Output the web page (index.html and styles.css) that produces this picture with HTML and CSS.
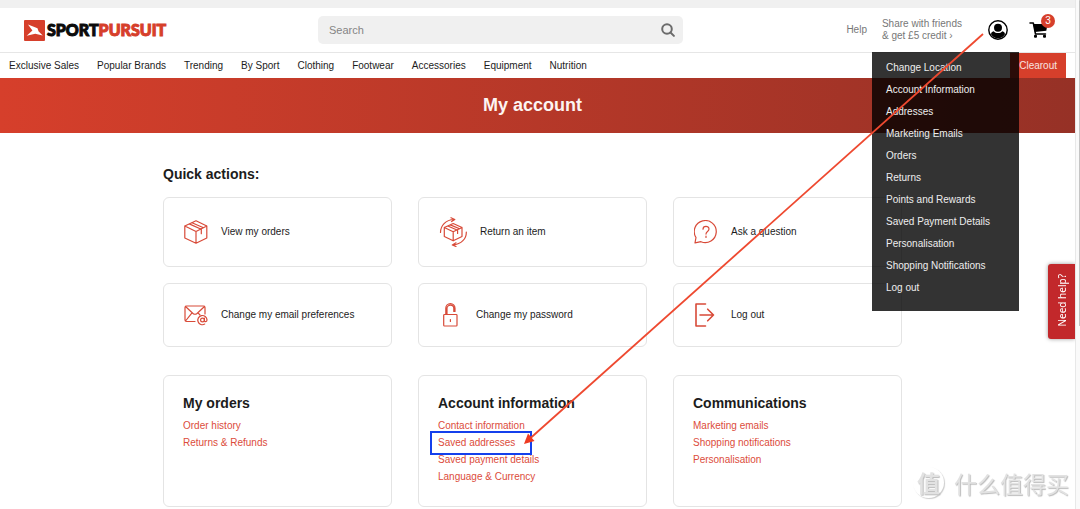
FILE: index.html
```html
<!DOCTYPE html>
<html lang="en">
<head>
<meta charset="utf-8">
<meta name="viewport" content="width=device-width, initial-scale=1">
<title>My account - SportPursuit</title>
<link rel="stylesheet" href="styles.css">
</head>
<body>
<div class="page">
  <div class="top-strip"></div>
  <header class="header">
    <a class="logo" href="#" aria-label="SportPursuit">
      <svg class="logo-mark" viewBox="0 0 21 21" aria-hidden="true"><rect width="21" height="21" rx="1" fill="#d63f2b"/><path d="M4 4.500 13.500 8.300 14.500 11.300 18.700 15.500 11.200 13.800 2.700 15.700 8.400 10.600Z" fill="#fff"/></svg>
      <span class="logo-text">SPORT<span class="logo-accent">PURSUIT</span></span>
    </a>
    <form class="search" role="search">
      <input class="search-input" type="search" placeholder="Search" aria-label="Search">
      <button class="search-button" type="button" aria-label="Search">
        <svg viewBox="0 0 14 14" width="14" height="14" fill="none" stroke="#6b6b6b" stroke-width="2"><circle cx="6" cy="6" r="4.8"/><path d="m9.5 9.5 3.4 3.4" stroke-linecap="round"/></svg>
      </button>
    </form>
    <div class="tools">
      <a class="tool-link help" href="#">Help</a>
      <a class="tool-link share" href="#">Share with friends<br>&amp; get £5 credit ›</a>
      <button class="icon-button account" type="button" aria-label="Account" aria-expanded="true">
        <svg viewBox="0 0 20 20" width="20" height="20"><circle cx="10" cy="10" r="9.200" fill="#fff" stroke="#000" stroke-width="1.400"/><circle cx="10" cy="7.800" r="4"/><path d="M5.600 11.200c2.200 2.500 6.600 2.500 8.800 0 1.600.3 2.500 1.500 2.600 3A8.300 8.300 0 0 1 10 18.300 8.300 8.300 0 0 1 3 14.200c.1-1.500 1-2.700 2.600-3Z"/></svg>
      </button>
      <button class="icon-button cart" type="button" aria-label="Cart, 3 items">
        <svg viewBox="0 0 20 18" width="20" height="18"><path d="M1 2H4.300L6.500 13H16.500" fill="none" stroke="#000" stroke-width="1.500" stroke-linecap="round" stroke-linejoin="round"/><path d="M4.300 3H18.500L17.300 9.800 5.800 11Z"/><rect x="5" y="13.700" width="3" height="3" rx="1"/><rect x="14" y="13.700" width="3" height="3" rx="1"/></svg>
        <span class="badge">3</span>
      </button>
    </div>
    <ul class="account-menu">
      <li><a href="#">Change Location</a></li>
      <li><a href="#">Account Information</a></li>
      <li><a href="#">Addresses</a></li>
      <li><a href="#">Marketing Emails</a></li>
      <li><a href="#">Orders</a></li>
      <li><a href="#">Returns</a></li>
      <li><a href="#">Points and Rewards</a></li>
      <li><a href="#">Saved Payment Details</a></li>
      <li><a href="#">Personalisation</a></li>
      <li><a href="#">Shopping Notifications</a></li>
      <li><a href="#">Log out</a></li>
    </ul>
  </header>
  <nav class="nav">
    <a href="#">Exclusive Sales</a>
    <a href="#">Popular Brands</a>
    <a href="#">Trending</a>
    <a href="#">By Sport</a>
    <a href="#">Clothing</a>
    <a href="#">Footwear</a>
    <a href="#">Accessories</a>
    <a href="#">Equipment</a>
    <a href="#">Nutrition</a>
    <a class="clearout" href="#">Clearout</a>
  </nav>
  <div class="banner"><h1>My account</h1></div>
  <main class="main">
    <h2 class="section-title">Quick actions:</h2>
    <div class="grid">
      <a class="card action tall" href="#">
        <svg class="icon" viewBox="0 0 24 24" width="24" height="24"><path d="M12 .8 22.800 6v12L12 23.200.8 18V6ZM.8 6 12 11.500 22.800 6M12 11.500v11.700M5.200 3.900 17.300 9.300v4.400M8 2.700l11.500 5"/></svg>
        <span>View my orders</span>
      </a>
      <a class="card action tall" href="#">
        <svg class="icon" viewBox="0 0 28 30" width="28" height="30"><path d="M14.200 6.500 23 10.500v9L14.200 23.800 5.300 19.500v-9ZM5.300 10.500l8.900 4.300 8.800-4.300M14.200 14.800v9M8.800 9l9.800 4.200v3.300M11.300 7.900l9.300 3.900M1.500 15.500C1.500 9 6.500 2.800 15 2.500M12 .7l3.800 1.800-3.200 2M27.300 15C27.500 21.500 22.500 27.400 14 27.900M17 25.800l-3.700 2.100 3.700 1.600"/></svg>
        <span>Return an item</span>
      </a>
      <a class="card action tall" href="#">
        <svg class="icon" viewBox="0 0 24 24" width="24" height="24"><path d="M1 22.800 2 17.500A11 11 0 1 1 7 21.700ZM9 9.200c0-3.700 6-3.700 6-.1 0 2.500-3 2.400-3 5M12 16v1.500"/></svg>
        <span>Ask a question</span>
      </a>
      <a class="card action" href="#">
        <svg class="icon" viewBox="0 0 24 22" width="24" height="22"><path d="M11 17.500H2.500Q1 17.500 1 16V3.500Q1 2 2.500 2H19.500Q21 2 21 3.500V10M1.500 2.500 9 9.500Q11 11 13 9.500L20.500 2.500M1.500 17 8 8.800M14 8.800 16 11"/><circle cx="18.500" cy="16" r="1.900"/><path d="M20.400 14v2.500c0 1.800 2.600 1.500 2.600-.6a4.600 4.600 0 1 0-2.300 4.200"/></svg>
        <span>Change my email preferences</span>
      </a>
      <a class="card action" href="#">
        <svg class="icon" viewBox="0 0 24 24" width="24" height="24"><rect x="4.700" y="11.500" width="13.300" height="11.500" rx=".8"/><path d="M6.800 11.500V5.300a4.600 4.600 0 0 1 9.200 0V8.500M8 11V5.500a3.400 3.400 0 0 1 6.800 0V8.500H16M11.400 16.500v2"/></svg>
        <span>Change my password</span>
      </a>
      <a class="card action" href="#">
        <svg class="icon heavy" viewBox="0 0 24 24" width="24" height="24"><path d="M11.500 1H2v22h9.500M6 12h13.500M13.700 6.200l5.800 5.800-5.800 5.800"/></svg>
        <span>Log out</span>
      </a>
    </div>
    <div class="grid details">
      <section class="card panel">
        <h2>My orders</h2>
        <a href="#">Order history</a>
        <a href="#">Returns &amp; Refunds</a>
      </section>
      <section class="card panel">
        <h2>Account information</h2>
        <a href="#">Contact information</a>
        <a href="#">Saved addresses</a>
        <a href="#">Saved payment details</a>
        <a href="#">Language &amp; Currency</a>
      </section>
      <section class="card panel">
        <h2>Communications</h2>
        <a href="#">Marketing emails</a>
        <a href="#">Shopping notifications</a>
        <a href="#">Personalisation</a>
      </section>
    </div>
  </main>
</div>
<button class="need-help" type="button"><span>Need help?</span></button>
<div class="scroll-track"><div class="scroll-thumb"></div></div>
<svg class="annotation" viewBox="0 0 1080 509" width="1080" height="509" aria-hidden="true">
  <rect x="431" y="432" width="100" height="22" fill="none" stroke="#1440ec" stroke-width="2"/>
  <path d="M983 34 530 438.500" stroke="#ee4930" stroke-width="1.800"/>
  <path d="M524 444 528 433.500 534.500 441Z" fill="#ee3a22"/>
</svg>
<div class="watermark"><span class="watermark-seal">值</span><span>什么值得买</span></div>
</body>
</html>
```
FILE: styles.css
```css
* { box-sizing: border-box; }
body {
  margin: 0;
  position: relative;
  background: #fff;
  color: #1c1c1c;
  font: 10px/14px "Liberation Sans", Arial, sans-serif;
  overflow-x: hidden;
}
a { color: inherit; text-decoration: none; }
button { font: inherit; border: 0; padding: 0; background: none; cursor: pointer; }
h1, h2, ul { margin: 0; padding: 0; }
.page { margin-right: 5px; }
.top-strip { height: 8px; background: #f0f0f0; }
.header {
  position: relative;
  display: grid;
  grid-template-columns: 294px 1fr 392px;
  align-items: center;
  height: 45px;
  padding-left: 24px;
  border-bottom: 1px solid #e6e6e6;
}
.logo { display: flex; align-items: center; gap: 2px; }
.logo-mark { width: 21px; height: 21px; }
.logo-text { color: #0b0b0b; font: 900 16px/20px Lato, sans-serif; -webkit-text-stroke: 1px; }
.logo-accent { color: #d63f2b; }
.search {
  display: flex;
  align-items: center;
  height: 28px;
  padding: 0 8px 0 11px;
  background: #f0f0f0;
  border-radius: 5px;
}
.search-input {
  flex: 1;
  min-width: 0;
  padding: 0;
  border: 0;
  outline: 0;
  background: none;
  font: 11px/16px "Liberation Sans", Arial, sans-serif;
}
.search-input::placeholder { color: #858585; }
.search-button { display: flex; }
.tools { display: flex; align-items: center; justify-content: flex-end; padding-right: 20px; }
.tool-link { color: #777; line-height: 12px; white-space: nowrap; }
.help { margin-right: 15px; }
.share { margin-right: 26px; }
.icon-button { display: flex; position: relative; }
.account { margin-right: 21px; }
.cart { width: 26px; }
.badge {
  position: absolute;
  top: -7px;
  right: 0;
  width: 14px;
  height: 14px;
  border-radius: 50%;
  background: #d63f2b;
  color: #fff;
  line-height: 14px;
  text-align: center;
}
.account-menu {
  position: absolute;
  top: 44px;
  right: 56px;
  z-index: 2;
  width: 147px;
  padding: 5px 14px 12px;
  background: rgba(0, 0, 0, .8);
  color: #eee;
  line-height: 22px;
  list-style: none;
  white-space: nowrap;
}
.account-menu a { display: block; }
.nav { display: flex; gap: 18px; padding: 0 9px; line-height: 25px; white-space: nowrap; }
.clearout { margin-left: auto; padding: 0 9px; background: #d63f2b; color: #f8e4e0; }
.banner {
  padding: 15px 10px 15px 0;
  background: linear-gradient(90deg, #d63f2b, #963126);
  color: #fdf4f2;
  text-align: center;
}
.banner h1 { font-size: 18px; line-height: 25px; }
.main { max-width: 1100px; margin: 0 auto; padding: 32px 173px 1px 163px; }
.section-title { margin-bottom: 14px; font-size: 14px; line-height: 18px; }
.grid { display: grid; grid-template-columns: repeat(3, 1fr); gap: 16px 26px; }
.details { margin-top: 28px; }
.card { border: 1px solid #e4e4e4; border-radius: 6px; }
.action { display: flex; align-items: center; gap: 13px; min-height: 64px; padding: 16px 20px; }
.action.tall { min-height: 70px; }
.icon { flex: none; fill: none; stroke: #d84a38; stroke-width: 1.2; stroke-linejoin: round; stroke-linecap: round; }
.heavy { stroke-width: 1.6; }
.panel { display: flex; flex-direction: column; align-items: flex-start; min-height: 132px; padding: 18px 19px; color: #dc4c3b; line-height: 17px; }
.panel h2 { margin-bottom: 5px; color: #1c1c1c; font-size: 14px; line-height: 18px; }
.need-help {
  position: fixed;
  top: 264px;
  right: 5px;
  width: 27px;
  height: 75px;
  border-radius: 3px 0 0 3px;
  background: #c2282b;
  box-shadow: 0 0 4px rgba(0, 0, 0, .4);
  color: #fff;
  font: 10px/14px "Noto Sans", sans-serif;
}
.need-help span { display: inline-block; writing-mode: vertical-rl; transform: rotate(180deg); }
.scroll-track {
  position: fixed;
  inset: 0 0 0 auto;
  width: 5px;
  padding-left: 3px;
  background: #fafafa;
  border-left: 1px solid #e8e8e8;
}
.scroll-thumb { height: 64%; background: #c4c4c4; border-radius: 1px; }
.annotation { position: absolute; top: 0; left: 0; z-index: 3; pointer-events: none; }
.watermark {
  position: fixed;
  right: 11px;
  bottom: 11px;
  display: flex;
  align-items: center;
  gap: 10px;
  color: #e2e2e2;
  font: 23px/30px "Noto Sans CJK SC", sans-serif;
  text-shadow: 1px 1px 1px #bbb;
}
.watermark-seal {
  width: 31px;
  height: 31px;
  border-radius: 50%;
  box-shadow: 1px 1px 1px #ccc;
  font-weight: 700;
  text-align: center;
}
```
